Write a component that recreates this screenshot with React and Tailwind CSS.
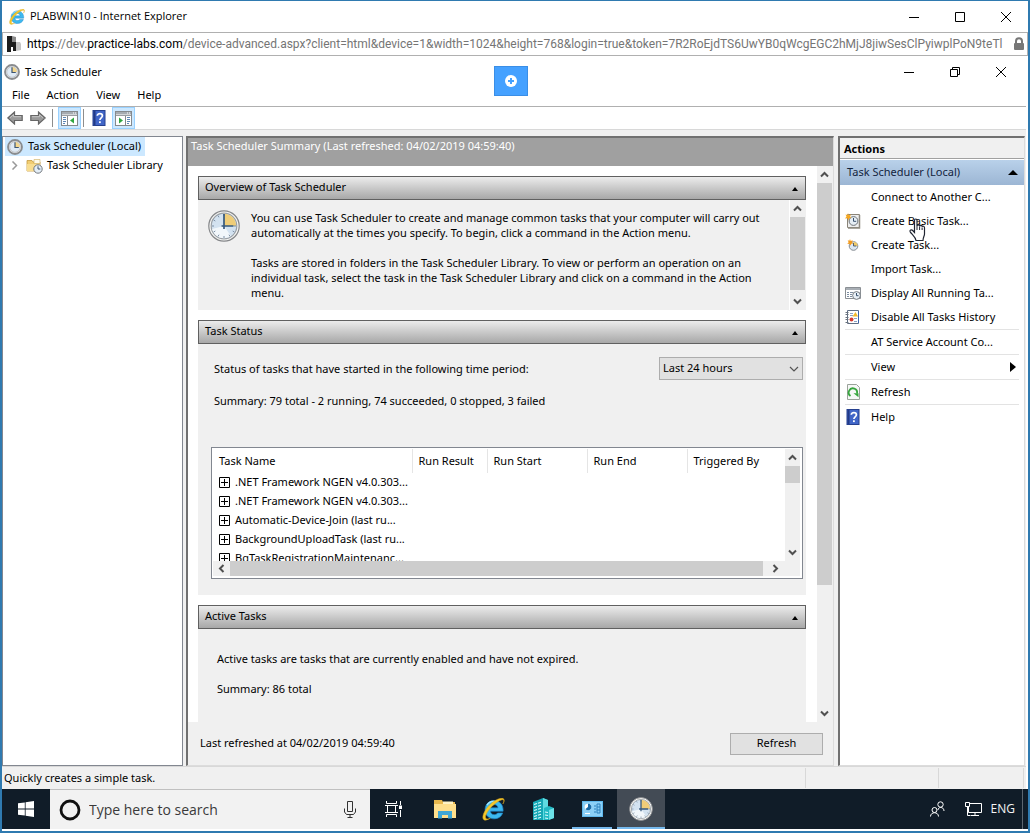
import React, { useState } from "react";

const ACTIONS = [
    { label: "Connect to Another C..." },
    { label: "Create Basic Task...", icon: BasicTaskIcon },
    { label: "Create Task...", icon: NewTaskIcon },
    { label: "Import Task..." },
    { label: "Display All Running Ta...", icon: RunningIcon },
    { label: "Disable All Tasks History", icon: HistoryIcon },
    { label: "AT Service Account Co...", divided: true },
    { label: "View", divided: true, submenu: true },
    { label: "Refresh", divided: true, icon: RefreshIcon },
    { label: "Help", divided: true, icon: HelpIcon },
];

const TASKS = [
    ".NET Framework NGEN v4.0.303...",
    ".NET Framework NGEN v4.0.303...",
    "Automatic-Device-Join (last ru...",
    "BackgroundUploadTask (last ru...",
    "BgTaskRegistrationMaintenanc...",
];

/* ---------- icons ---------- */

function ClockIcon({ className }) {
    return (
        <svg viewBox="0 0 32 32" className={className} aria-hidden="true">
            <circle cx="16" cy="16" r="15.2" fill="#f7f7f5" stroke="#85878a" strokeWidth="1.2" />
            <circle cx="16" cy="16" r="12.8" fill="#d3e2f0" stroke="#9aa0a6" strokeWidth="1.2" />
            <path d="M4 19a12.4 12.4 0 0 0 19 7L16 16z" fill="#f2f7fb" />
            <path d="M16 16V3.8A12.2 12.2 0 0 1 28.2 16z" fill="#efcd78" />
            <path
                d="M16 4v2M16 26v2M4 16h2M26 16h2M10 5.6l1 1.7M5.6 10l1.7 1M5.6 22l1.7-1M10 26.4l1-1.7M22 26.4l-1-1.7M26.4 22l-1.7-1"
                stroke="#7d90a6"
                strokeWidth="1"
            />
            <path d="M16 4v15M13.5 16h12" stroke="#35597f" strokeWidth="1.7" fill="none" />
        </svg>
    );
}

function SmallClockIcon({ className }) {
    return (
        <svg viewBox="0 0 16 16" className={className} aria-hidden="true">
            <circle cx="8" cy="8" r="7" fill="#f2f2f2" stroke="#8a8c8f" strokeWidth="1.8" />
            <circle cx="8" cy="8" r="5.3" fill="#dfeaf5" stroke="#b5b9bd" strokeWidth=".8" />
            <path d="M8 8V3a5 5 0 0 1 5 5z" fill="#f3d68d" />
            <path d="M8 3.2V8.500h3.8" stroke="#3c5573" strokeWidth="1.2" fill="none" />
        </svg>
    );
}

function IeIcon({ className }) {
    return (
        <svg viewBox="1.5 1.5 21 21" className={className} aria-hidden="true">
            <path
                d="M20.8 13.5H9.2c.2 2 1.5 3.2 3.5 3.2 1.4 0 2.4-.5 3-1.5h4.7c-1.2 3.5-4.1 5.3-7.8 5.3-4.9 0-8.3-3.2-8.3-8.2s3.5-8.3 8.3-8.3c5.2 0 8.4 3.7 8.2 9.5zm-4.7-3c-.2-1.8-1.5-3-3.4-3-1.8 0-3.1 1.1-3.4 3z"
                fill="#3db8ee"
                stroke="#1b86cc"
                strokeWidth=".6"
            />
            <path d="M6 8c2-3 5-4 8-3.2" stroke="#9fe4ff" strokeWidth="1.2" fill="none" />
            <path
                d="M3.5 21.5C-.2 19.5 5 9.5 12.5 4.5c4.7-3.1 9-3.7 9.2-1.2.1 1-.3 2.2-1.1 3.6 2.2-4.2.3-5-4-2.5C9.5 8.4 3.6 17 4.8 19.8c.5 1.2 2 1.1 4.3.1-2.5 1.5-4.5 2.2-5.6 1.6z"
                fill="#f4c82c"
                stroke="#e0a91c"
                strokeWidth=".5"
            />
        </svg>
    );
}

function SiteIcon({ className }) {
    return (
        <svg viewBox="0 0 14 16" className={className} aria-hidden="true">
            <path d="M0 0h5v6h4v9H6v-4H4v5H0z" fill="#1c1c1c" />
            <path d="M5 0l4 1v5H5z" fill="#8a8a8a" />
            <path d="M9 6h4l1 2v6l-5 1z" fill="#c4c4c4" />
        </svg>
    );
}

function LockIcon({ className }) {
    return (
        <svg viewBox="0 0 12 14" className={className} aria-hidden="true">
            <path d="M3 7V4.3a3 3 0 0 1 6 0V7" stroke="#777" strokeWidth="2" fill="none" />
            <rect x="1" y="6" width="10" height="7" rx="1" fill="#777" />
        </svg>
    );
}

function HelpIcon() {
    return (
        <svg viewBox="0 0 16 16" className="size-4" aria-hidden="true">
            <rect x="2" y=".5" width="12" height="15" fill="#4166c8" stroke="#26408f" />
            <path d="M2.5 1h2v14h-2z" fill="#233a86" />
            <path
                d="M6.3 5.8C6.3 3 11.4 3 11.4 5.8c0 2-2.5 2.1-2.5 4.2"
                stroke="#fff"
                strokeWidth="1.7"
                fill="none"
            />
            <rect x="8" y="11.3" width="1.8" height="1.8" fill="#fff" />
        </svg>
    );
}

function ArrowIcon({ className }) {
    return (
        <svg viewBox="0 0 16 14" className={className} aria-hidden="true">
            <path d="M.8 7L7.5 1v3.5h7.7v5H7.5V13z" fill="#9a9a9a" stroke="#666" strokeWidth="1.2" />
            <path d="M3 6.8L6.5 3.7v2h7.5" stroke="#c4c4c4" fill="none" />
        </svg>
    );
}

function PaneIcon({ flipped }) {
    return (
        <svg viewBox="0 0 17 15" className="h-[15px] w-[17px]" aria-hidden="true">
            <rect x=".5" y=".5" width="16" height="14" fill="#fff" stroke="#85898d" />
            <path d="M1 1h15v2.5H1z" fill="#a5abb1" />
            <path d="M12 2h1M14 2h1" stroke="#fff" />
            <path d="M1 4.5h15" stroke="#9a9ea2" />
            {flipped ? (
                <>
                    <path d="M10.5 5v9" stroke="#85898d" />
                    <path d="M12 6.5h3M12 8.5h3M12 10.5h3M12 12.5h2" stroke="#5d86b5" />
                    <path d="M4 6.5v6l4-3z" fill="#2fa640" />
                </>
            ) : (
                <>
                    <path d="M6.5 5v9" stroke="#85898d" />
                    <path d="M2 6.5h3M2 8.5h3M2 10.5h3M2 12.5h2" stroke="#5d86b5" />
                    <path d="M13 6.5v6l-4-3z" fill="#2fa640" />
                </>
            )}
        </svg>
    );
}

function FolderClockIcon() {
    return (
        <svg viewBox="0 0 17 16" className="h-4 w-[17px]" aria-hidden="true">
            <path d="M1 2.5h5l1 1.5h7v9H1z" fill="#f1cd72" stroke="#c59a3f" strokeWidth=".8" />
            <path d="M8 1.5h6v4H8z" fill="#fffbe9" stroke="#cfae60" strokeWidth=".6" />
            <path d="M1 6h13v7H1z" fill="#f8dd90" />
            <circle cx="12" cy="11" r="4.2" fill="#e4eef7" stroke="#74797f" />
            <path d="M12 8.3V11h2.3" stroke="#3c5573" fill="none" />
        </svg>
    );
}

function BasicTaskIcon() {
    return (
        <svg viewBox="0 0 16 16" className="size-4" aria-hidden="true">
            <path d="M2.5 1.5h12v13h-12z" fill="#eee" stroke="#8a8478" />
            <path d="M14.5 2v13H3" stroke="#8f8a80" strokeWidth="1.5" fill="none" />
            <circle cx="8.5" cy="8" r="4.4" fill="#e5edf4" stroke="#6d7378" />
            <path d="M8.5 5v3.3h2.7" stroke="#374f6c" fill="none" />
            <path d="M3 0l.8 2.2L6 1.5 5 3.5l1.5 1.5-2.3.2L3.5 7.5 2.5 5.3 0 5.5l1.5-2L.5 1.5l2 .5z" fill="#f5a720" />
        </svg>
    );
}

function NewTaskIcon() {
    return (
        <svg viewBox="0 0 16 16" className="size-4" aria-hidden="true">
            <circle cx="8.5" cy="9" r="4.3" fill="#dce8f3" stroke="#858b91" />
            <path d="M8.5 9V5a4 4 0 0 1 4 4z" fill="#f2cc68" />
            <path d="M8.5 6v3h2.8" stroke="#4d5f76" fill="none" />
            <path d="M5 2l.7 1.9L7.8 3.3 7 5.2l1.3 1.3-2 .2L5.5 8.7 4.6 6.8l-2.3.1 1.3-1.7L2.7 3.3l1.7.4z" fill="#f39b1d" />
        </svg>
    );
}

function RunningIcon() {
    return (
        <svg viewBox="0 0 16 16" className="size-4" aria-hidden="true">
            <path d="M.5 2.5h15v11H.5z" fill="#fff" stroke="#8a8f94" />
            <path d="M1 3h14v2H1z" fill="#a8aeb4" />
            <path d="M2 7.5h2M5 7.5h3M2 9.5h2M5 9.5h2M2 11.5h2M5 11.5h2" stroke="#7c8da1" />
            <circle cx="11.5" cy="10.5" r="3.9" fill="#e7eff6" stroke="#777c81" />
            <path d="M11.5 8v2.7h2" stroke="#374f6c" fill="none" />
        </svg>
    );
}

function HistoryIcon() {
    return (
        <svg viewBox="0 0 16 16" className="size-4" aria-hidden="true">
            <path d="M2.5 1.5h11v13h-11z" fill="#fff" stroke="#5f6d83" />
            <path d="M.5 3.5h3M.5 5.5h3M.5 8.5h3M.5 10.5h3M.5 13.5h3" stroke="#69727d" />
            <path d="M5 4.5h3M5 6.5h3M9 9.5h3M9 12.5h3" stroke="#8da3c4" />
            <path d="M7.5 7.5L10.5 3 13 7.5z" fill="#f0b92c" />
            <circle cx="6.5" cy="10.5" r="2" fill="#d43a2f" />
            <path d="M13.5 2v12" stroke="#3b64ad" />
        </svg>
    );
}

function RefreshIcon() {
    return (
        <svg viewBox="0 0 16 16" className="size-4" aria-hidden="true">
            <path d="M2.5.5h9l3 3v12h-12z" fill="#f6f8f6" stroke="#9aa29a" />
            <path d="M5.5 12A4.2 4.2 0 1 1 12 9.5" stroke="#35a53c" strokeWidth="1.8" fill="none" />
            <path d="M8.5 9.3h5v4z" fill="#35a53c" />
        </svg>
    );
}

function PointerIcon({ className }) {
    return (
        <svg viewBox="0 0 18 24" className={className} aria-hidden="true">
            <path
                d="M5.5 14.5V2.2c0-1.6 2.5-1.6 2.5 0V8c.3-1.5 2.6-1.3 2.6.2.4-1.2 2.5-1 2.5.6.5-1 2.4-.7 2.4 1V16c0 2-1.5 3.5-1.5 6.5H7C6.5 19 3 16.5 1.2 13.8.3 12 2.5 11.2 3.7 12.5z"
                fill="#fff"
                stroke="#1f2430"
                strokeWidth="1.2"
            />
            <path d="M8 8v4M10.6 8.5V12M13.1 9.5V12" stroke="#1f2430" />
        </svg>
    );
}

function Chevron({ dir = "up", className = "size-[9px]" }) {
    const paths = {
        up: "M1 6.5L4.5 3 8 6.5",
        down: "M1 2.5L4.5 6 8 2.5",
        left: "M6.5 1L3 4.5 6.5 8",
        right: "M2.5 1L6 4.5 2.5 8",
    };
    return (
        <svg viewBox="0 0 9 9" className={className} aria-hidden="true">
            <path d={paths[dir]} stroke="#505050" strokeWidth="2" fill="none" />
        </svg>
    );
}

/* ---------- window pieces ---------- */

function WindowButtons({ restored }) {
    return (
        <div className="flex items-center gap-9">
            <button type="button" aria-label="Minimize">
                <svg viewBox="0 0 10 10" className="size-[10px]">
                    <path d="M0 5.5h10" stroke="#000" />
                </svg>
            </button>
            <button type="button" aria-label="Maximize">
                <svg viewBox="0 0 10 10" className="size-[10px]" fill="none" stroke="#000">
                    {restored ? (
                        <path d="M.5 2.5h7v7h-7zM2.5 2.5v-2h7v7h-2" />
                    ) : (
                        <path d="M.5.5h9v9h-9z" />
                    )}
                </svg>
            </button>
            <button type="button" aria-label="Close">
                <svg viewBox="0 0 10 10" className="size-[10px]" fill="none" stroke="#000">
                    <path d="M0 0l10 10M10 0L0 10" />
                </svg>
            </button>
        </div>
    );
}

function ScrollColumn({ thumb }) {
    return (
        <div className="mr-px flex w-[15px] shrink-0 flex-col bg-[#f0f0f0]">
            <button type="button" aria-label="Scroll up" className="grid h-[17px] shrink-0 place-items-center">
                <Chevron dir="up" />
            </button>
            <div className="min-h-0 flex-1">
                <div className="bg-[#cdcdcd]" style={{ height: thumb }} />
            </div>
            <button type="button" aria-label="Scroll down" className="grid h-[17px] shrink-0 place-items-center">
                <Chevron dir="down" />
            </button>
        </div>
    );
}

function Section({ title, children }) {
    const [open, setOpen] = useState(true);

    return (
        <section className="shrink-0 bg-[#f0f0f0]">
            <button
                type="button"
                onClick={() => setOpen(!open)}
                className="flex h-6 w-full items-center justify-between border border-[#606060] bg-linear-to-b from-[#ececec] to-[#a8a8a8] pr-[7px] pb-[2px] pl-[6px]"
            >
                <span>{title}</span>
                <svg viewBox="0 0 6 4" className="mt-1 h-1 w-[6px]" aria-hidden="true">
                    <path d="M0 4l3-4 3 4z" />
                </svg>
            </button>
            {open && children}
        </section>
    );
}

function TaskTable() {
    return (
        <div className="mr-[3px] ml-[13px] border border-[#828790] bg-white px-px pt-px pb-[2px]">
            <div className="flex h-28">
                <div className="min-w-0 flex-1 overflow-hidden">
                    <table className="w-full table-fixed text-left">
                        <thead>
                            <tr className="h-6">
                                <th className="w-[199px] border-r border-[#e5e5e5] pl-[6px] font-normal">Task Name</th>
                                <th className="w-[75px] border-r border-[#e5e5e5] pl-[6px] font-normal">Run Result</th>
                                <th className="w-[100px] border-r border-[#e5e5e5] pl-[6px] font-normal">Run Start</th>
                                <th className="w-[100px] border-r border-[#e5e5e5] pl-[6px] font-normal">Run End</th>
                                <th className="pl-[6px] font-normal">Triggered By</th>
                            </tr>
                        </thead>
                        <tbody>
                            {TASKS.map((task, i) => (
                                <tr key={i} className="h-[19px]">
                                    <td>
                                        <div className="flex h-[19px] items-center gap-[5px] pl-[6px] whitespace-nowrap">
                                            <button type="button" aria-label={`Expand ${task}`}>
                                                <svg viewBox="0 0 11 11" className="size-[11px]">
                                                    <path
                                                        d="M.5.5h10v10H.5zM2 5.5h7M5.5 2v7"
                                                        fill="none"
                                                        stroke="#000"
                                                    />
                                                </svg>
                                            </button>
                                            {task}
                                        </div>
                                    </td>
                                    <td />
                                    <td />
                                    <td />
                                    <td />
                                </tr>
                            ))}
                        </tbody>
                    </table>
                </div>
                <ScrollColumn thumb="22%" />
            </div>
            <div className="mr-px flex h-[15px] bg-[#f0f0f0]">
                <button type="button" aria-label="Scroll left" className="grid w-[17px] place-items-center">
                    <Chevron dir="left" />
                </button>
                <div className="flex-1 bg-[#cdcdcd]" />
                <button type="button" aria-label="Scroll right" className="mr-[13px] grid w-6 place-items-center">
                    <Chevron dir="right" />
                </button>
            </div>
        </div>
    );
}

function SummaryPane() {
    return (
        <main className="flex min-w-0 flex-1 flex-col border-t-2 border-r border-b border-l-2 border-t-[#707070] border-r-[#dcdcdc] border-b-[#dcdcdc] border-l-[#707070] bg-[#f0f0f0]">
            <h2 className="h-7 shrink-0 bg-[#a0a0a0] pl-[3px] leading-4 text-white">
                Task Scheduler Summary (Last refreshed: 04/02/2019 04:59:40)
            </h2>
            <div className="flex min-h-0 flex-1">
                <div className="flex min-w-0 flex-1 flex-col gap-[10px] overflow-hidden bg-white pt-[10px] pr-[11px] pl-[10px]">
                    <Section title="Overview of Task Scheduler">
                        <div className="flex h-[110px]">
                            <ClockIcon className="mt-[10px] ml-[10px] size-8 shrink-0" />
                            <div className="mt-[10px] ml-[11px] min-w-0 flex-1 leading-[15px]">
                                <p>
                                    You can use Task Scheduler to create and manage common tasks that your computer will carry out
                                    <br />
                                    automatically at the times you specify. To begin, click a command in the Action menu.
                                </p>
                                <p className="mt-[15px]">
                                    Tasks are stored in folders in the Task Scheduler Library. To view or perform an operation on an
                                    <br />
                                    individual task, select the task in the Task Scheduler Library and click on a command in the Action
                                    <br />
                                    menu.
                                </p>
                            </div>
                            <span className="w-px shrink-0 bg-white" />
                            <ScrollColumn thumb="96%" />
                        </div>
                    </Section>

                    <Section title="Task Status">
                        <div className="h-[251px] pt-[13px]">
                            <div className="flex items-center justify-between pr-[3px] pl-4">
                                <label htmlFor="period" className="pt-[2px]">
                                    Status of tasks that have started in the following time period:
                                </label>
                                <div className="relative">
                                    <select
                                        id="period"
                                        className="h-[23px] w-36 appearance-none border border-[#adadad] bg-[#e1e1e1] pl-[3px]"
                                    >
                                        <option>Last 24 hours</option>
                                    </select>
                                    <svg
                                        viewBox="0 0 10 6"
                                        className="pointer-events-none absolute top-[9px] right-1 h-[6px] w-[10px]"
                                        aria-hidden="true"
                                    >
                                        <path d="M1 1l4 4 4-4" stroke="#555" strokeWidth="1.2" fill="none" />
                                    </svg>
                                </div>
                            </div>
                            <p className="mt-3 mb-[38px] pl-4 leading-[17px]">
                                Summary: 79 total - 2 running, 74 succeeded, 0 stopped, 3 failed
                            </p>
                            <TaskTable />
                        </div>
                    </Section>

                    <Section title="Active Tasks">
                        <div className="h-[140px] px-[19px] pt-[22px] leading-4">
                            <p>Active tasks are tasks that are currently enabled and have not expired.</p>
                            <p className="mt-[14px]">Summary: 86 total</p>
                        </div>
                    </Section>
                </div>
                <ScrollColumn thumb="77%" />
            </div>
            <div className="flex h-[43px] shrink-0 items-center justify-between pr-[10px] pl-3">
                <span>Last refreshed at 04/02/2019 04:59:40</span>
                <button type="button" className="h-[22px] w-[93px] border border-[#adadad] bg-[#e1e1e1]">
                    Refresh
                </button>
            </div>
        </main>
    );
}

function ActionsPane() {
    return (
        <aside className="w-[187px] shrink-0 border-t-2 border-r border-b border-l-2 border-t-[#707070] border-r-[#dcdcdc] border-b-[#dcdcdc] border-l-[#707070] bg-white">
            <h2 className="h-[21px] border-b border-[#a0a0a0] bg-[#f0f0f0] pl-1 leading-[21px] font-bold">Actions</h2>
            <button
                type="button"
                className="mt-px flex h-[25px] w-full items-center justify-between bg-linear-to-b from-[#b9d1ea] to-[#9cb6d4] pr-[6px] pl-[7px] text-[#12233d]"
            >
                Task Scheduler (Local)
                <svg viewBox="0 0 10 5" className="h-[5px] w-[10px]" aria-hidden="true">
                    <path d="M0 5l5-5 5 5z" />
                </svg>
            </button>
            <ul className="px-[5px]">
                {ACTIONS.map(({ label, icon: Icon, divided, submenu }) => (
                    <li key={label} className={divided ? "border-t border-[#e3e3e3]" : ""}>
                        <button type="button" className="flex h-6 w-full items-center text-left whitespace-nowrap">
                            <span className="w-[26px] shrink-0">{Icon && <Icon />}</span>
                            <span className="flex-1">{label}</span>
                            {submenu && (
                                <svg viewBox="0 0 6 10" className="mr-[3px] h-[10px] w-[6px]" aria-hidden="true">
                                    <path d="M0 0l6 5-6 5z" />
                                </svg>
                            )}
                        </button>
                    </li>
                ))}
            </ul>
        </aside>
    );
}

function Taskbar() {
    return (
        <footer className="flex h-10 shrink-0 bg-[#101c28]">
            <button type="button" aria-label="Start" className="grid w-12 place-items-center">
                <svg viewBox="0 0 16 16" className="size-4" fill="#fff" aria-hidden="true">
                    <path d="M0 2.3L6.8 1.4v6.2H0zM7.6 1.3L16 0v7.6H7.6zM0 8.4h6.8v6.2L0 13.7zM7.6 8.4H16V16l-8.4-1.3z" />
                </svg>
            </button>
            <div className="flex w-80 items-center border-t border-[#c0c0c0] bg-[#f2f2f2] pr-[14px] pl-[9px]">
                <svg viewBox="0 0 22 22" className="size-[22px] shrink-0" aria-hidden="true">
                    <circle cx="11" cy="11" r="9" fill="none" stroke="#111" strokeWidth="2.8" />
                </svg>
                <input
                    aria-label="Search"
                    placeholder="Type here to search"
                    className="ml-2 min-w-0 flex-1 bg-transparent font-['Open_Sans',sans-serif] text-[14px] outline-none placeholder:text-[#3a3a3a]"
                />
                <svg viewBox="0 0 12 17" className="h-[17px] w-3" fill="none" stroke="#333" aria-hidden="true">
                    <path d="M3.5.5h5v10h-5zM.5 7.5V11l2 2.5h7l2-2.5V7.5M6 13.5v3M3.5 16.5h5" />
                </svg>
            </div>
            <button type="button" aria-label="Task View" className="grid w-12 place-items-center">
                <svg viewBox="0 0 18 16" className="h-4 w-[18px]" fill="none" stroke="#fff" aria-hidden="true">
                    <path d="M1.5 0v2.5h10V0M1.5 16v-2.5h10V16M2.5 5v6M10.5 5v6M0 4.5h13M0 11.5h13M15.5 0v4M15.5 9v7" />
                    <rect x="14.5" y="5" width="2" height="2.5" fill="#fff" />
                </svg>
            </button>
            <button type="button" aria-label="File Explorer" className="ml-[3px] grid w-12 place-items-center">
                <svg viewBox="0 0 22 19" className="h-[19px] w-[22px]" aria-hidden="true">
                    <path d="M0 0h8l1 2h12v5H0z" fill="#e9b84d" />
                    <path d="M9 1.5h10v3H9z" fill="#fff3c6" />
                    <path d="M0 4h22v14H0z" fill="#ffdf8c" />
                    <path d="M4 18.5V11h14v7.5h-4V15H8v3.5z" fill="#3fa7d6" />
                </svg>
            </button>
            <button type="button" aria-label="Internet Explorer" className="grid w-12 place-items-center">
                <IeIcon className="size-[23px]" />
            </button>
            <button type="button" aria-label="Server Manager" className="ml-[2px] grid w-12 place-items-center">
                <svg viewBox="0 0 22 22" className="size-[22px]" aria-hidden="true">
                    <path d="M1 4l10-4 5 2v20H1z" fill="#16a7b5" />
                    <path d="M11 0l5 2v20h-5z" fill="#5edce2" />
                    <path d="M12 10l5-2 5 2v10l-6 2h-4z" fill="#22b9c4" />
                    <path d="M17 12l5-2v10l-5 2z" fill="#6ce2e8" />
                    <path
                        d="M2 6.5l3-1M6 5.2l3-1M2 9.5l3-1M6 8.2l3-1M2 12.5l3-1M6 11.2l3-1M2 15.5l3-1M6 14.2l3-1M2 18.5l3-1M6 17.2l3-1M2 21l3-1M6 20.2l3-1M13 14l3 .5M13 17l3 .5M13 20l3 .5"
                        stroke="#d7fbfc"
                        strokeWidth="1.2"
                    />
                </svg>
            </button>
            <button
                type="button"
                aria-label="Control Panel"
                className="ml-[5px] grid w-10 place-items-center border-y-2 border-t-transparent border-b-[#76b9ed]"
            >
                <svg viewBox="0 0 21 16" className="h-4 w-[21px]" aria-hidden="true">
                    <path d="M0 0h21v16H0z" fill="#5fb9ee" />
                    <path d="M1 1h19v14H1z" fill="#8bd0f7" />
                    <circle cx="6" cy="6" r="3.3" fill="#fff" />
                    <path d="M6 6V2.7A3.3 3.3 0 1 1 3.5 8z" fill="#176aa8" />
                    <path d="M12 5h2M12 8h2M12 11h2M15 3h3v9h-3zM15 6h3M15 9h3" stroke="#2a80bd" fill="none" />
                    <path d="M3 12.5h5" stroke="#fff" />
                </svg>
            </button>
            <button
                type="button"
                aria-label="Task Scheduler"
                className="ml-[5px] grid w-12 place-items-center border-y-2 border-t-[#434b55] border-b-[#76b9ed] bg-[#434b55]"
            >
                <ClockIcon className="size-6" />
            </button>
            <div className="ml-auto flex items-center pr-[5px] text-[#f4f4f4]">
                <svg viewBox="0 0 15 16" className="h-4 w-[15px]" fill="none" stroke="#fff" aria-hidden="true">
                    <circle cx="10.5" cy="3.5" r="2.7" />
                    <path d="M8 9c0-3.5 6-3.5 6 1" />
                    <circle cx="4.5" cy="9" r="2.5" />
                    <path d="M.5 15.5c0-5 8-5 8 0" />
                </svg>
                <svg viewBox="0 0 17 14" className="ml-5 h-[14px] w-[17px]" fill="none" stroke="#fff" aria-hidden="true">
                    <path d="M5 1.5h11.5v9h-13V5M10 10.5v3M6 13.5h8M.5.5h4v4h-4zM2.5 4.5v9h3" />
                </svg>
                <span className="ml-[9px] font-['Open_Sans',sans-serif] text-[12px]">ENG</span>
                <span className="ml-[7px] h-10 w-px bg-[#5d6670]" />
            </div>
        </footer>
    );
}

export default function App() {
    return (
        <div className="flex h-screen flex-col border-x-2 border-t border-b-2 border-[#2f7ab0] bg-white font-['Noto_Sans',sans-serif] text-[11px] text-black">
            <header className="flex h-[31px] shrink-0 items-center justify-between pr-[17px] pl-[7px]">
                <div className="flex items-center gap-[5px]">
                    <IeIcon className="size-4" />
                    <h1 className="font-['Open_Sans',sans-serif]">PLABWIN10 - Internet Explorer</h1>
                </div>
                <WindowButtons />
            </header>

            <div className="flex h-6 shrink-0 items-center border border-[#b0b0b0] pr-[2px] pl-1">
                <SiteIcon className="h-4 w-[14px] shrink-0" />
                <div
                    role="textbox"
                    aria-label="Address"
                    className="ml-[6px] min-w-0 flex-1 overflow-hidden font-[Roboto,sans-serif] text-[12px] whitespace-nowrap text-[#757575]"
                >
                    <span className="text-black">https</span>://dev.<span className="text-black">practice-labs.com</span>
                    /device-advanced.aspx?client=html&amp;device=1&amp;width=1024&amp;height=768&amp;login=true&amp;token=7R2RoEjdTS6UwYB0qWcgEGC2hMjJ8jiwSesClPyiwplPoN9teTl
                </div>
                <LockIcon className="ml-[5px] h-[14px] w-3 shrink-0" />
            </div>

            <div className="relative flex min-h-0 flex-1 flex-col pr-[2px]">
                <div className="flex h-8 shrink-0 items-center justify-between pr-5 pl-[2px]">
                    <div className="flex items-center gap-[5px]">
                        <SmallClockIcon className="size-4" />
                        <h2>Task Scheduler</h2>
                    </div>
                    <WindowButtons restored />
                </div>
                <button
                    type="button"
                    aria-label="Open toolbar"
                    className="absolute top-[10px] left-1/2 grid h-[30px] w-[34px] -translate-x-[21px] place-items-center border border-[#3a8ee6] bg-[#45a1ff]"
                >
                    <svg viewBox="0 0 12 12" className="size-3" aria-hidden="true">
                        <circle cx="6" cy="6" r="6" fill="#fff" />
                        <path d="M6 3v6M3 6h6" stroke="#45a1ff" strokeWidth="2" />
                    </svg>
                </button>

                <nav className="flex h-[19px] shrink-0 items-center gap-[17px] border-b border-[#b0b0b0] pb-1 pl-[10px]">
                    <button type="button">File</button>
                    <button type="button">Action</button>
                    <button type="button">View</button>
                    <button type="button">Help</button>
                </nav>

                <div className="flex h-[23px] shrink-0 items-center border-b border-[#d8d8d8] pl-[5px]">
                    <button type="button" aria-label="Back">
                        <ArrowIcon className="h-[14px] w-4" />
                    </button>
                    <button type="button" aria-label="Forward" className="ml-[7px]">
                        <ArrowIcon className="h-[14px] w-4 -scale-x-100" />
                    </button>
                    <span className="ml-[6px] h-[18px] w-px bg-[#8d8d8d]" />
                    <button
                        type="button"
                        aria-label="Toggle console tree"
                        className="ml-[5px] grid h-[22px] w-[23px] place-items-center border border-[#99d1ff] bg-[#cce8ff]"
                    >
                        <PaneIcon />
                    </button>
                    <span className="ml-[2px] h-[18px] w-px bg-[#8d8d8d]" />
                    <button type="button" aria-label="Help" className="ml-[7px]">
                        <HelpIcon />
                    </button>
                    <button
                        type="button"
                        aria-label="Toggle action pane"
                        className="ml-[5px] grid h-[22px] w-[23px] place-items-center border border-[#99d1ff] bg-[#cce8ff]"
                    >
                        <PaneIcon flipped />
                    </button>
                </div>

                <div className="flex min-h-0 flex-1 bg-[#f0f0f0] pt-[6px] pr-px">
                    <nav className="w-[181px] shrink-0 border border-[#828790] bg-white whitespace-nowrap">
                        <button type="button" className="ml-[2px] flex h-[19px] items-center bg-[#cce8ff] pr-1 pl-[2px]">
                            <SmallClockIcon className="size-4" />
                            <span className="ml-[5px]">Task Scheduler (Local)</span>
                        </button>
                        <button type="button" className="flex h-[19px] items-center pl-2">
                            <svg viewBox="0 0 7 9" className="h-[9px] w-[7px]" aria-hidden="true">
                                <path d="M1.5.5l4 4-4 4" stroke="#999" strokeWidth="1.5" fill="none" />
                            </svg>
                            <span className="mr-1 ml-2">
                                <FolderClockIcon />
                            </span>
                            Task Scheduler Library
                        </button>
                    </nav>
                    <span className="w-[3px] shrink-0" />
                    <SummaryPane />
                    <span className="w-1 shrink-0" />
                    <ActionsPane />
                </div>

                <div className="flex h-[23px] shrink-0 items-center border-t border-[#d8d8d8] bg-[#f0f0f0] pr-[2px]">
                    <span className="flex-1 pl-[2px]">Quickly creates a simple task.</span>
                    <span className="h-5 w-[133px] border-l border-[#d8d8d8]" />
                    <span className="h-5 w-[86px] border-x border-[#d8d8d8]" />
                </div>

                <PointerIcon className="pointer-events-none absolute top-[162px] right-[101px] h-6 w-[18px]" />
            </div>

            <div className="mb-[2px]">
                <Taskbar />
            </div>
        </div>
    );
}
